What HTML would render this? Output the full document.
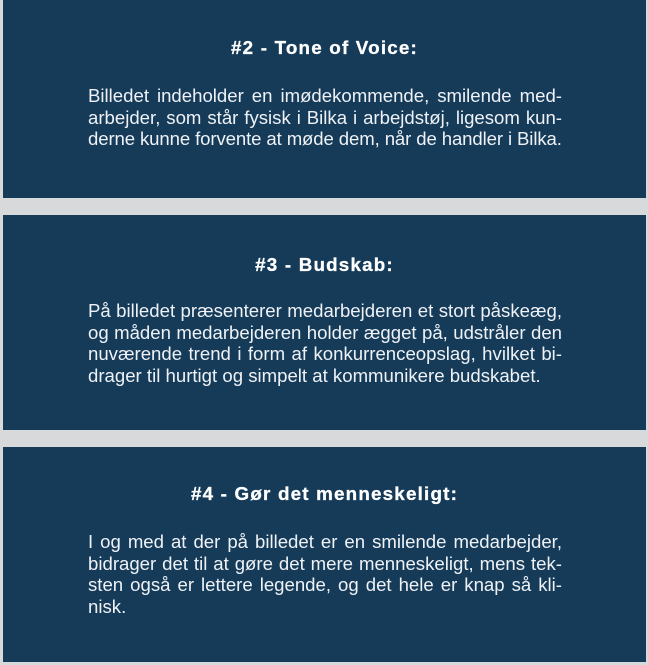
<!DOCTYPE html>
<html><head><meta charset="utf-8"><style>
html,body{margin:0;padding:0}
body{width:648px;height:665px;background:#d8d9da;position:relative;overflow:hidden;font-family:"Liberation Sans",Arial,sans-serif}
.box{position:absolute;left:3px;width:643px;background:#163b59}
.t{position:absolute;left:0;width:100%;text-align:center;color:#fff;font-weight:bold;font-size:18.8px;letter-spacing:1.2px;line-height:22px;-webkit-text-stroke:0.3px #fff}
.b{position:absolute;left:85px;width:474px;color:#eef2f6;font-size:18.6px;line-height:21.6px}
.b div{text-align:justify;text-align-last:justify;white-space:nowrap;height:21.6px}
.b div.l{text-align-last:left}
</style></head><body>
<div class="box" style="top:0;height:198px">
 <div class="t" style="top:37px">#2 - Tone of Voice:</div>
 <div class="b" style="top:85px">
  <div>Billedet indeholder en imødekommende, smilende med-</div>
  <div>arbejder, som står fysisk i Bilka i arbejdstøj, ligesom kun-</div>
  <div class="l" style="letter-spacing:-0.12px">derne kunne forvente at møde dem, når de handler i Bilka.</div>
 </div>
</div>
<div class="box" style="top:215px;height:215px">
 <div class="t" style="top:39px">#3 - Budskab:</div>
 <div class="b" style="top:85px">
  <div>På billedet præsenterer medarbejderen et stort påskeæg,</div>
  <div>og måden medarbejderen holder ægget på, udstråler den</div>
  <div>nuværende trend i form af konkurrenceopslag, hvilket bi-</div>
  <div class="l">drager til hurtigt og simpelt at kommunikere budskabet.</div>
 </div>
</div>
<div class="box" style="top:447px;height:215px">
 <div class="t" style="top:36px">#4 - Gør det menneskeligt:</div>
 <div class="b" style="top:84px">
  <div>I og med at der på billedet er en smilende medarbejder,</div>
  <div>bidrager det til at gøre det mere menneskeligt, mens tek-</div>
  <div>sten også er lettere legende, og det hele er knap så kli-</div>
  <div class="l">nisk.</div>
 </div>
</div>
</body></html>
